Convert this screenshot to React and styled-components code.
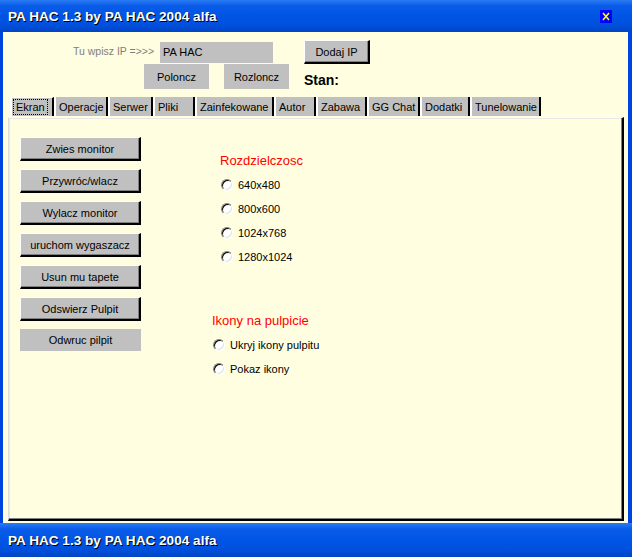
import React from 'react';
import styled, { createGlobalStyle, css } from 'styled-components';

const GlobalStyle = createGlobalStyle`
  html, body { margin: 0; padding: 0; }
  body {
    font-family: "Liberation Sans", Arial, sans-serif;
    font-size: 11px;
    color: #000;
    background: #fff;
  }
`;

const Window = styled.div`
  width: 632px;
  height: 557px;
  display: flex;
  flex-direction: column;
  overflow: hidden;
`;

const blueBar = css`
  background: linear-gradient(180deg, #2a7bf4 0%, #0a5ce8 18%, #0055e5 50%, #0050dc 80%, #0044c4 100%);
  color: #fff;
  font-weight: bold;
  font-size: 13.6px;
  text-shadow: 1px 1px 0 #000;
  display: flex;
  align-items: center;
  flex: none;
  white-space: nowrap;
`;

const TitleBar = styled.div`
  ${blueBar};
  height: 32px;
  padding: 0 20px 0 8px;
  justify-content: space-between;
`;

const CloseBox = styled.div`
  width: 12px;
  height: 13px;
  background: #0000ff;
  display: flex;
  align-items: center;
  justify-content: center;
`;

const BottomBar = styled.div`
  ${blueBar};
  height: 34px;
  padding: 0 8px;
`;

const Body = styled.div`
  flex: 1;
  background: #fffee1;
  border-left: 3px solid #0044e0;
  border-right: 4px solid #0044e0;
  padding: 8px 4px 2px 5px;
  display: flex;
  flex-direction: column;
`;

const Row = styled.div`
  display: flex;
  align-items: center;
  margin-left: ${p => p.$indent}px;
  height: ${p => p.$h}px;
`;

const Hint = styled.span`
  color: #808080;
  width: 87px;
  font-size: 10.5px;
  white-space: nowrap;
  padding-bottom: 3px;
`;

const Field = styled.div`
  width: 110px;
  height: 21px;
  background: #c0c0c0;
  padding-left: 3px;
  display: flex;
  align-items: center;
  margin-right: 31px;
`;

const Button = styled.div`
  width: ${p => p.$w}px;
  height: ${p => p.$h || 24}px;
  box-sizing: border-box;
  background: #c0c0c0;
  display: flex;
  align-items: center;
  justify-content: center;
  white-space: nowrap;
  flex: none;
  ${p => p.$raised && css`
    border-top: 1px solid #fff;
    border-left: 1px solid #fff;
    border-right: 2px solid #000;
    border-bottom: 2px solid #000;
    box-shadow: inset -1px -1px 0 #808080;
  `}
`;

const ButtonPair = styled.div`
  display: flex;
  gap: 15px;
`;

const Status = styled.span`
  font-weight: bold;
  font-size: 14px;
  margin-left: 15px;
  padding-top: 6px;
`;

const TabStrip = styled.div`
  display: flex;
  margin: 8px 0 0 2px;
  height: 19px;
`;

const Tab = styled.div`
  box-sizing: border-box;
  width: ${p => p.$w}px;
  background: #c0c0c0;
  border-left: 2px solid #fff;
  border-right: 2px solid #000;
  display: flex;
  align-items: center;
  padding-left: 3px;
  white-space: nowrap;
  ${p => p.$active && css`
    border-top: 1px solid #fff;
    padding-left: 2px;
    span { outline: 1px dotted #000; padding: 0 2px; line-height: 14px; }
  `}
`;

const Panel = styled.div`
  flex: 1;
  margin-top: 1px;
  border-top: 1px solid #fff;
  border-left: 1px solid #ddd;
  border-right: 2px solid #000;
  border-bottom: 2px solid #000;
  box-shadow: inset -1px -1px 0 #808080, inset 1px 1px 0 #e8e8e8;
  display: grid;
  grid-template-columns: 121px 1fr;
  column-gap: 71px;
  align-content: start;
  padding: 19px 0 0 11px;
`;

const ButtonColumn = styled.div`
  display: flex;
  flex-direction: column;
  gap: 8px;
`;

const Groups = styled.div`
  display: flex;
  flex-direction: column;
`;

const Group = styled.div`
  margin-left: ${p => p.$indent}px;
  margin-top: ${p => p.$top}px;
  display: flex;
  flex-direction: column;
`;

const GroupTitle = styled.div`
  color: #ff0000;
  font-size: 13px;
  height: 18px;
  line-height: 18px;
  margin-bottom: 3px;
`;

const Option = styled.label`
  display: flex;
  align-items: center;
  height: 24px;
  gap: 5px;
  margin-left: 1px;
`;

const RadioDot = styled.span`
  width: 12px;
  height: 12px;
  box-sizing: border-box;
  border-radius: 50%;
  background: #fff;
  border: 1px solid;
  border-color: #808080 #fff #fff #808080;
  box-shadow: inset 1px 1px 0 #000, inset -1px -1px 0 #e0e0e0;
  flex: none;
`;

const buttons = [
  'Zwies monitor',
  'Przywróc/wlacz',
  'Wylacz monitor',
  'uruchom wygaszacz',
  'Usun mu tapete',
  'Odswierz Pulpit',
];

const tabs = [
  ['Ekran', 44], ['Operacje', 54], ['Serwer', 45], ['Pliki', 42], ['Zainfekowane', 79],
  ['Autor', 42], ['Zabawa', 51], ['GG Chat', 53], ['Dodatki', 50], ['Tunelowanie', 71],
];

const resolutions = ['640x480', '800x600', '1024x768', '1280x1024'];
const iconOptions = ['Ukryj ikony pulpitu', 'Pokaz ikony'];

const App = () => (
  <Window>
    <GlobalStyle />
    <TitleBar>
      <span>PA HAC 1.3 by PA HAC 2004 alfa</span>
      <CloseBox>
        <svg width="8" height="9" viewBox="0 0 8 9">
          <path d="M1 1 L7 8 M7 1 L1 8" stroke="#ffff00" strokeWidth="1.6" />
        </svg>
      </CloseBox>
    </TitleBar>
    <Body>
      <Row $indent={65} $h={24}>
        <Hint>Tu wpisz IP =&gt;&gt;&gt;</Hint>
        <Field>PA HAC</Field>
        <Button $w={66} $raised>Dodaj IP</Button>
      </Row>
      <Row $indent={136} $h={25}>
        <ButtonPair>
          <Button $w={65} $h={25}>Poloncz</Button>
          <Button $w={65} $h={25}>Rozloncz</Button>
        </ButtonPair>
        <Status>Stan:</Status>
      </Row>
      <TabStrip>
        {tabs.map(([t, w], i) => (
          <Tab key={t} $w={w} $active={i === 0}><span>{t}</span></Tab>
        ))}
      </TabStrip>
      <Panel>
        <ButtonColumn>
          {buttons.map(b => <Button key={b} $w={121} $raised>{b}</Button>)}
          <Button $w={121} $h={22}>Odwruc pilpit</Button>
        </ButtonColumn>
        <Groups>
          <Group $indent={8} $top={15}>
            <GroupTitle>Rozdzielczosc</GroupTitle>
            {resolutions.map(r => <Option key={r}><RadioDot />{r}</Option>)}
          </Group>
          <Group $indent={0} $top={43}>
            <GroupTitle>Ikony na pulpicie</GroupTitle>
            {iconOptions.map(r => <Option key={r}><RadioDot />{r}</Option>)}
          </Group>
        </Groups>
      </Panel>
    </Body>
    <BottomBar>PA HAC 1.3 by PA HAC 2004 alfa</BottomBar>
  </Window>
);

export default App;
